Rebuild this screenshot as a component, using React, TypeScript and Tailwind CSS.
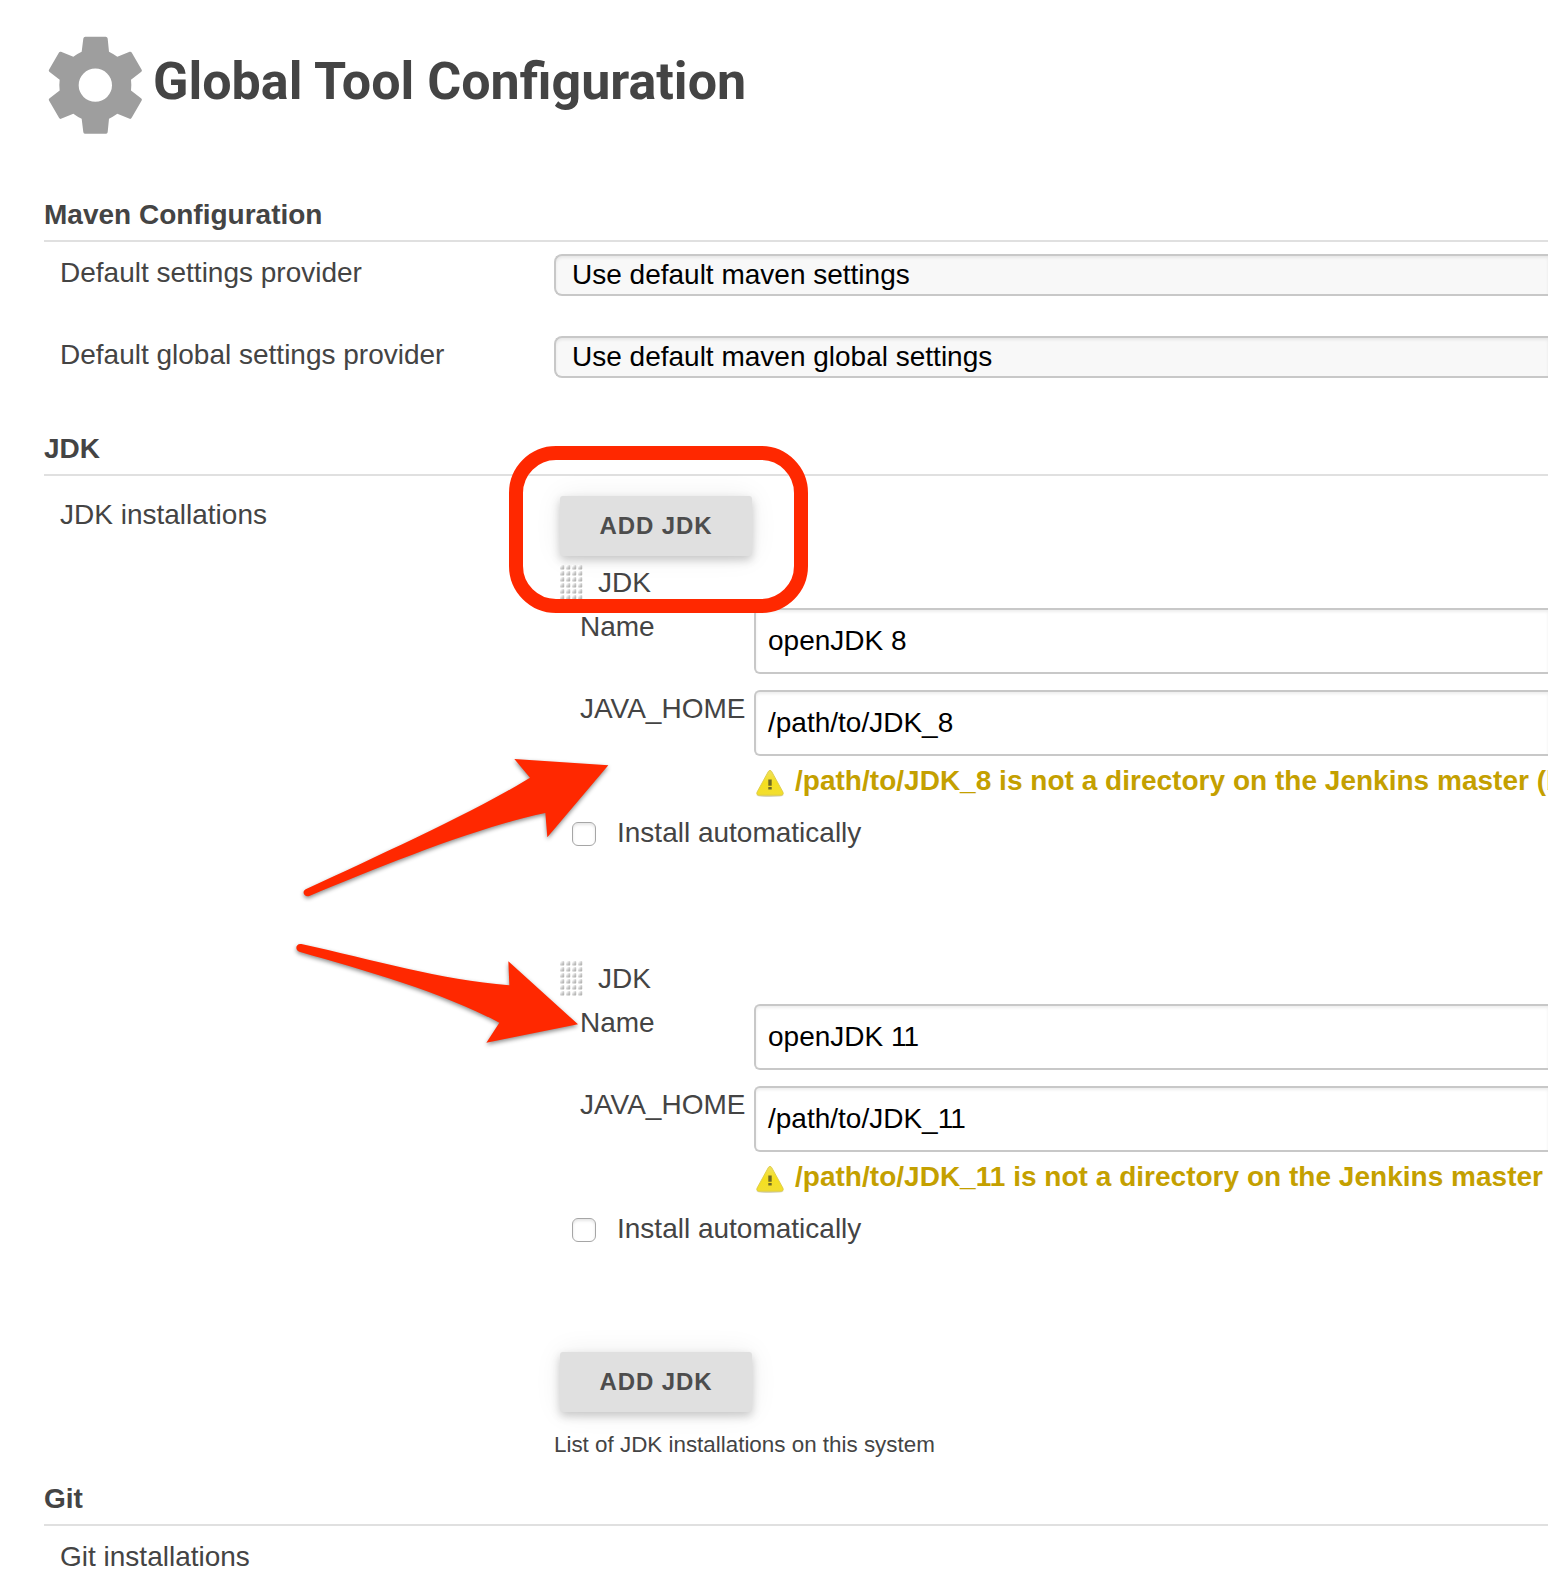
import React from "react";

function Gear() {
  return (
    <svg className="h-[98px] w-[96px] shrink-0" viewBox="52 48.500 288 294" fill="#9e9e9e">
      <path
        fillRule="evenodd"
        d="M167 51H228Q233 51 234 56L238 96Q250 102 263 111L300 96Q304 95 306 98L336 150Q338 153 335 156L304 180Q306 196 304 212L335 236Q338 239 336 242L306 294Q304 298 300 297L263 282Q250 291 238 297L234 337Q233 342 228 342H167Q162 342 161 337L156 297Q143 291 131 282L94 297Q90 298 88 294L58 242Q56 239 59 236L90 212Q88 196 90 180L59 156Q56 153 58 150L88 98Q90 95 94 96L131 111Q143 102 156 96L161 56Q162 51 167 51ZM197 146A50 50 0 1 0 197 246A50 50 0 1 0 197 146Z"
      />
    </svg>
  );
}

function SectionTitle({ children }: { children: React.ReactNode }) {
  return (
    <h2 className="h-[44px] border-b-2 border-[#e0e0e0] pt-px text-[28px] leading-[32px] font-bold">
      {children}
    </h2>
  );
}

function Select({ value }: { value: string }) {
  return (
    <div className="h-[42px] flex-1 rounded-l-[8px] border-2 border-r-0 border-[#c8c8c8] bg-[#f8f8f8] pl-4 text-[28px] leading-[38px] text-black shadow-[inset_0_2px_3px_rgba(0,0,0,0.07)]">
      {value}
    </div>
  );
}

function SelectRow({ label, value }: { label: string; value: string }) {
  return (
    <div className="flex h-[82px] pt-3">
      <div className="w-[510px] shrink-0 pt-[3px] pl-4 leading-[32px]">{label}</div>
      <Select value={value} />
    </div>
  );
}

function AddButton() {
  return (
    <button
      type="button"
      className="ml-[6px] block h-[60px] w-[192px] rounded-[3px] bg-[#e0e0e0] pl-[39.5px] text-left text-[24px] leading-[60px] font-bold tracking-[0.9px] text-[#4d4d4d] shadow-[0_4px_10px_rgba(0,0,0,0.2),0_0_28px_rgba(0,0,0,0.07)]"
    >
      ADD JDK
    </button>
  );
}

function DragHandle({ id }: { id: string }) {
  return (
    <svg className="h-[37px] w-[23px]" viewBox="0 0 23 37">
      <defs>
        <linearGradient id={id + "-dot"} x1="0" y1="0" x2="1" y2="1">
          <stop offset="0.15" stopColor="#ffffff" />
          <stop offset="0.6" stopColor="#c4c4c4" />
          <stop offset="1" stopColor="#a6a6a2" />
        </linearGradient>
      </defs>
      {[0, 1, 2, 3, 4, 5].map((row) =>
        [0, 1, 2, 3].map((col) => (
          <rect
            key={row + "-" + col}
            x={col * 6}
            y={row * 6 + 1}
            width="4.2"
            height="4.6"
            rx="0.8"
            fill={"url(#" + id + "-dot)"}
          />
        )),
      )}
    </svg>
  );
}

function Warning({ id }: { id: string }) {
  return (
    <svg className="h-[30px] w-[30px] shrink-0" viewBox="0 0 30 30">
      <defs>
        <linearGradient id={id + "-warn"} x1="0" y1="0" x2="0" y2="1">
          <stop offset="0" stopColor="#efe060" />
          <stop offset="0.5" stopColor="#f5df1e" />
          <stop offset="1" stopColor="#f2de30" />
        </linearGradient>
      </defs>
      <ellipse cx="15" cy="27.6" rx="13.5" ry="1.3" fill="#8f8640" opacity="0.35" />
      <path
        d="M13.4 3.400Q15 1.2 16.6 3.400L28 24.200Q29 27 26.500 27.200H3.500Q1 27 2 24.200Z"
        fill={"url(#" + id + "-warn)"}
        stroke="#dccb45"
        strokeWidth="0.9"
      />
      <path d="M13.300 11.500h3.400v6.300h-3.400zM13.300 19h3.400v2.600h-3.400z" fill="#6f6826" />
    </svg>
  );
}

function FieldValue({ value }: { value: string }) {
  if (!value.endsWith("11")) return <>{value}</>;
  return (
    <>
      {value.slice(0, -2)}
      <span className="tracking-[-1px]">11</span>
    </>
  );
}

function Field({ label, value }: { label: string; value: string }) {
  return (
    <div className="flex h-[82px]">
      <div className="w-[174px] shrink-0 pt-[3px] leading-[32px]">{label}</div>
      <div className="h-[66px] flex-1 rounded-l-[6px] border-2 border-r-0 border-[#c8c8c8] bg-white pl-3 leading-[62px] text-black shadow-[inset_0_2px_3px_rgba(0,0,0,0.07)]">
        <FieldValue value={value} />
      </div>
    </div>
  );
}

function Installation({ id, name, home }: { id: string; name: string; home: string }) {
  return (
    <div className="h-[396px]">
      <div className="flex h-[48px] pt-1 pl-[6px]">
        <DragHandle id={id} />
        <div className="pt-[3px] pl-[15px] leading-[32px]">JDK</div>
      </div>
      <div className="pl-[26px]">
        <Field label="Name" value={name} />
        <Field label="JAVA_HOME" value={home} />
      </div>
      <div className="flex h-[50px] pl-[201px] font-bold whitespace-nowrap text-[#c4a000]">
        <div className="-mt-[4px]">
          <Warning id={id} />
        </div>
        <div className="-mt-[7px] pl-[10px] leading-[32px] tracking-[0.02px]">
          {home} is not a directory on the Jenkins master (but
        </div>
      </div>
      <label className="flex pl-[18px]">
        <input
          type="checkbox"
          className="h-[24px] w-[24px] appearance-none rounded-[6px] border border-[#a6a6a6] bg-white shadow-[inset_0_2px_3px_rgba(0,0,0,0.1)]"
        />
        <span className="-mt-[5px] pl-[21px] leading-[32px]">Install automatically</span>
      </label>
    </div>
  );
}

function Annotations() {
  return (
    <>
      <div className="pointer-events-none absolute top-[446px] left-[509px] h-[167px] w-[299px] rounded-[47px] border-[14px] border-[#ff2800]" />
      <svg
        className="pointer-events-none absolute top-[740px] left-[290px] h-[320px] w-[340px] overflow-visible drop-shadow-[0_2px_2px_rgba(0,0,0,0.45)]"
        viewBox="0 0 1020 960"
        fill="#ff2800"
      >
        <path d="M47 448C270 344 560 212 720 113L673 57L955 76L772 292L766 219C560 262 270 380 58 468C43 473 34 455 47 448Z" />
        <path d="M34 612C250 659 450 719 658 736L655 664L864 853L589 908L628 848C450 754 230 693 28 635C13 629 18 609 34 612Z" />
      </svg>
    </>
  );
}

export default function App() {
  return (
    <main className="relative h-[1574px] w-[1548px] overflow-hidden bg-white pl-[44px] font-['Liberation_Sans',Arial,sans-serif] text-[28px] text-[#444444]">
      <header className="flex h-[198px] pt-[36px] pl-[3px]">
        <Gear />
        <h1 className="pt-[16px] pl-[10px] font-['Roboto',sans-serif] text-[52px] leading-[60px] font-bold whitespace-nowrap">
          Global Tool Configuration
        </h1>
      </header>

      <section className="h-[234px]">
        <SectionTitle>Maven Configuration</SectionTitle>
        <SelectRow label="Default settings provider" value="Use default maven settings" />
        <SelectRow label="Default global settings provider" value="Use default maven global settings" />
      </section>

      <section className="h-[1050px]">
        <SectionTitle>JDK</SectionTitle>
        <div className="flex">
          <div className="w-[510px] shrink-0 pt-[23px] pl-4 leading-[32px]">JDK installations</div>
          <div className="min-w-0 flex-1 pt-[20px]">
            <AddButton />
            <div className="h-[796px] pt-1">
              <Installation id="jdk8" name="openJDK 8" home="/path/to/JDK_8" />
              <Installation id="jdk11" name="openJDK 11" home="/path/to/JDK_11" />
            </div>
            <AddButton />
            <p className="pt-[17px] text-[22.4px] leading-[32px]">List of JDK installations on this system</p>
          </div>
        </div>
      </section>

      <section>
        <SectionTitle>Git</SectionTitle>
        <div className="pt-[15px] pl-4 leading-[32px]">Git installations</div>
      </section>

      <Annotations />
    </main>
  );
}
